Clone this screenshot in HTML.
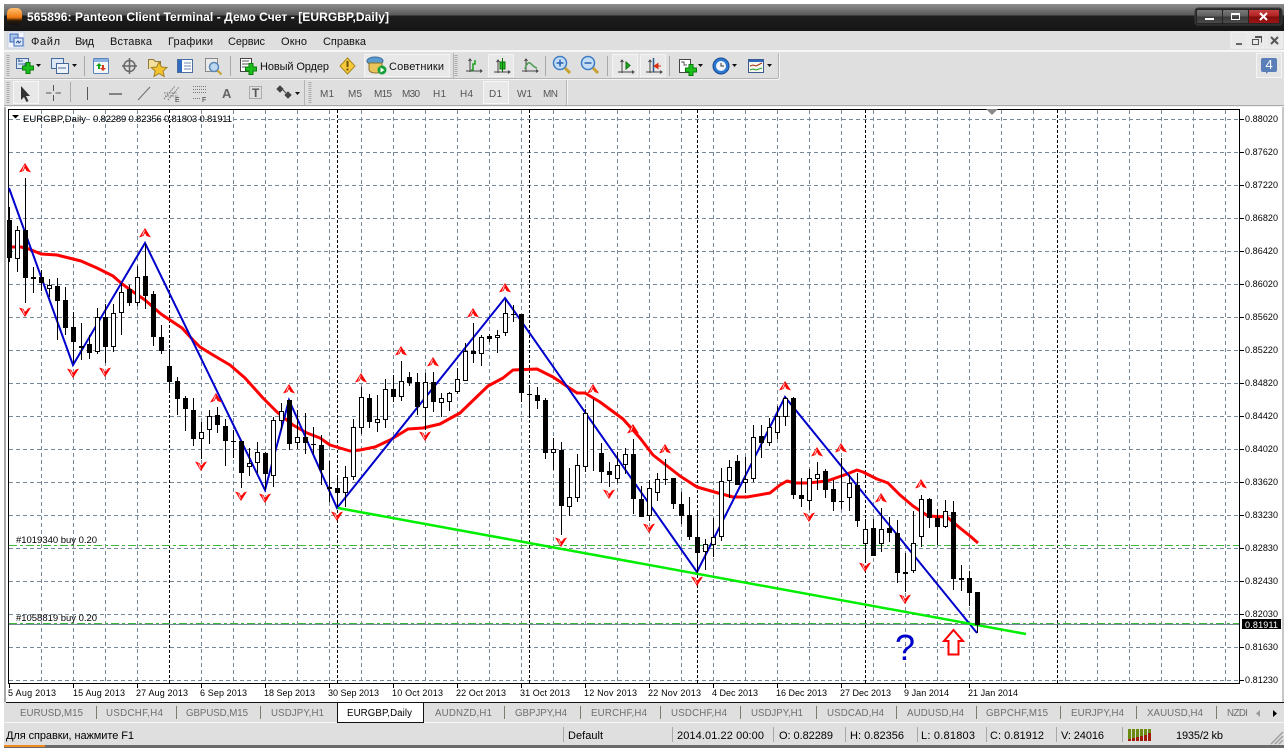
<!DOCTYPE html>
<html><head><meta charset="utf-8"><title>Panteon Client Terminal</title>
<style>
html,body{margin:0;padding:0;background:#fff}
svg{display:block;position:absolute;left:0;top:0;font-size:9.5px}
text{font-family:"Liberation Sans","Noto Sans CJK SC",sans-serif;fill:#000}
.m{font-size:11px;fill:#111}
.tf{font-size:10px;fill:#555}
.tab{font-size:9.7px;fill:#6e6e6e}
.s{font-size:11px;fill:#000}
</style></head><body>
<svg width="1288" height="748" viewBox="0 0 1288 748" xmlns="http://www.w3.org/2000/svg">
<defs>
<linearGradient id="tb" x1="0" y1="0" x2="0" y2="1"><stop offset="0" stop-color="#8e8e8e"/><stop offset=".42" stop-color="#585858"/><stop offset=".43" stop-color="#1e1e1e"/><stop offset="1" stop-color="#151515"/></linearGradient>
<linearGradient id="org" x1="0" y1="0" x2="0" y2="1"><stop offset="0" stop-color="#ffc070"/><stop offset=".55" stop-color="#f07a10"/><stop offset=".75" stop-color="#2a1a08"/><stop offset="1" stop-color="#111"/></linearGradient>
<linearGradient id="cbtn" x1="0" y1="0" x2="0" y2="1"><stop offset="0" stop-color="#7a7a7a"/><stop offset=".5" stop-color="#5c5c5c"/><stop offset=".51" stop-color="#3a3a3a"/><stop offset="1" stop-color="#4a4a4a"/></linearGradient>
<linearGradient id="rbtn" x1="0" y1="0" x2="0" y2="1"><stop offset="0" stop-color="#c84040"/><stop offset=".5" stop-color="#b02020"/><stop offset=".51" stop-color="#800c0c"/><stop offset="1" stop-color="#a01414"/></linearGradient>
<g id="ua"><path d="M0-5L6 4.500 1.500 3 0 0-1.500 3-6 4.500Z" fill="#f00"/><path d="M-.5-2.500L-2.500 2.500" stroke="#fff" stroke-width=".8"/></g>
<g id="da"><path d="M0 5L6-4.500 1.500-3 0 0-1.500-3-6-4.500Z" fill="#f00"/><path d="M.5-1L2.500-3.500" stroke="#fff" stroke-width=".8"/><path d="M-.5 2.500L-2.500-2.500" stroke="#fff" stroke-width=".8"/></g>
<path id="plus" d="M4 .5h4V4h3.500v4H8v3.500H4V8H.5V4H4z" fill="#1cc01c" stroke="#0a7a0a"/>
<g id="ax"><path d="M4 0v13M0 12h16" stroke="#444" fill="none"/><path d="M2.500 2L4 0 5.500 2M14 10.500l2 1.500-2 1.500" stroke="#444" fill="none"/></g>
</defs>

<!-- window chrome -->
<rect x="4" y="4" width="1280" height="27" fill="url(#tb)"/>
<rect x="4" y="31" width="1280" height="714" fill="#dfdfdf"/>
<rect x="4" y="745" width="1280" height="3" fill="#6a6a6a"/>
<rect x="4" y="745" width="41" height="2" fill="#f08a20"/>
<rect x="7" y="8" width="15" height="17" rx="5" fill="url(#org)"/>
<text x="27" y="21" style="font-size:12px;font-weight:bold;fill:#fff" textLength="362">565896: Panteon Client Terminal - Демо Счет - [EURGBP,Daily]</text>
<rect x="1195" y="8" width="87" height="17" rx="3" fill="#262626" stroke="#3c3c3c"/>
<rect x="1197" y="10" width="25" height="13" rx="1" fill="url(#cbtn)"/>
<rect x="1223" y="10" width="25" height="13" rx="1" fill="url(#cbtn)"/>
<rect x="1249" y="10" width="30" height="13" rx="1" fill="url(#rbtn)"/>
<rect x="1205" y="18" width="9" height="2" fill="#fff"/>
<rect x="1231.500" y="13.500" width="8" height="6" fill="none" stroke="#fff"/><rect x="1231" y="13" width="9" height="2" fill="#fff"/>
<path d="M1260 13l7 7M1267 13l-7 7" stroke="#fff" stroke-width="2"/>

<!-- menu -->
<rect x="8" y="32" width="16" height="16" fill="#f4f6fb" stroke="#c8d4e8"/>
<rect x="10" y="34" width="8" height="8" fill="#a9c4ec" stroke="#3a68b4"/>
<rect x="14" y="38" width="9" height="8" fill="#dde8f8" stroke="#3a68b4"/>
<path d="M16 43l2-2 1 2 2-2" stroke="#2a4c90" fill="none"/>
<text class="m" x="31" y="45" textLength="29">Файл</text>
<text class="m" x="75" y="45" textLength="19">Вид</text>
<text class="m" x="110" y="45" textLength="42">Вставка</text>
<text class="m" x="168" y="45" textLength="45">Графики</text>
<text class="m" x="228" y="45" textLength="37">Сервис</text>
<text class="m" x="281" y="45" textLength="26">Окно</text>
<text class="m" x="323" y="45" textLength="43">Справка</text>
<rect x="1231" y="32" width="16" height="16" fill="#e8e8e8" stroke="#f4f4f4"/>
<rect x="1249" y="32" width="15" height="16" fill="#e8e8e8" stroke="#f4f4f4"/>
<rect x="1266" y="32" width="16" height="16" fill="#e8e8e8" stroke="#f4f4f4"/>
<rect x="1236" y="43" width="6" height="2" fill="#666"/>
<path d="M1255.500 36.500h6v6M1252.500 39.500h6v5h-6z" fill="none" stroke="#555"/><rect x="1255" y="36" width="7" height="2" fill="#555"/>
<path d="M1271 37l7 7M1278 37l-7 7" stroke="#555" stroke-width="2"/>

<rect x="4" y="50" width="1280" height="2" fill="#f6f6f6"/>
<!-- toolbar separators/frames -->
<path d="M4 78.500H778M778.500 53V78M453.500 53V78" stroke="#b4b4b4"/>
<path d="M4 79.500H779M779.500 53V79" stroke="#f4f4f4"/>
<path d="M304.500 80V105M566.500 80V105" stroke="#b4b4b4"/>
<path d="M567.500 80V105" stroke="#f4f4f4"/>
<rect x="4" y="105" width="1280" height="1" fill="#a8a8a8"/>
<rect x="4" y="106" width="1280" height="1" fill="#f2f2f2"/>
<path d="M8 55V76M456 55V76M8 82V103M310 82V103" stroke="#aaa" stroke-width="3" stroke-dasharray="1 1"/>
<path d="M84.500 56V76M230.500 56V76M545.500 56V76M607.500 56V76M669.500 56V76M70.500 82V102" stroke="#a8a8a8"/>

<!-- row 1 icons -->
<rect x="16.500" y="58.500" width="12" height="10" fill="#dce8f6" stroke="#46699c"/><path d="M18 61h5M18 64h8M19 59v3M25 63v3" stroke="#46699c"/>
<use href="#plus" x="22" y="62"/>
<path d="M36 64h5l-2.500 3z" fill="#111"/>
<rect x="51.500" y="58.500" width="12" height="10" fill="#dce8f6" stroke="#46699c"/><rect x="56.500" y="63.500" width="12" height="10" fill="#eef3fa" stroke="#46699c"/><path d="M58 68h8" stroke="#46699c"/>
<path d="M72 64h5l-2.500 3z" fill="#111"/>
<rect x="93.500" y="58.500" width="15" height="15" rx="1" fill="#f6f6f6" stroke="#5a86c0"/><rect x="94" y="59" width="14" height="3" fill="#8ab0e0"/>
<path d="M99 63l3 3h-2v3h-2v-3h-2z" fill="#18a018"/><path d="M103 71l-3-3h2v-3h2v3h2z" fill="#d83a1c"/>
<circle cx="129.500" cy="66" r="5.500" fill="none" stroke="#666" stroke-width="1.500"/><path d="M129.500 58v16M122 66h15" stroke="#666" stroke-width="1.500"/>
<path d="M148.500 69V59.500h5l2 2h5v3" fill="#f4e09c" stroke="#8a7a40"/><path d="M159 62l2.500 5 5.500.5-4 3.500 1.200 5.500-5.200-3-5 3 1.200-5.500-4-3.500 5.500-.5z" fill="#f4c430" stroke="#a08020"/>
<rect x="177.500" y="59.500" width="15" height="13" fill="#fff" stroke="#4a6ea0"/><rect x="178" y="60" width="4" height="12" fill="#2f6bc0"/><path d="M184 63h7M184 66h7M184 69h7" stroke="#6a8ab0"/>
<rect x="205.500" y="58.500" width="12" height="13" fill="#eaeaea" stroke="#8a8a8a"/><circle cx="214" cy="67" r="4.500" fill="#bcd8f0" stroke="#5a88b8" stroke-width="1.500"/><path d="M217.500 70.500l4 4" stroke="#c8a030" stroke-width="2"/>
<rect x="240.500" y="58.500" width="11" height="13" fill="#fff" stroke="#444"/><path d="M242 61h7M242 64h7M242 67h4" stroke="#555"/>
<use href="#plus" x="245" y="63"/>
<text class="m" x="260" y="70" textLength="69">Новый Ордер</text>
<path d="M347.500 58l7.500 8-7.500 8-7.500-8z" fill="#f6c83a" stroke="#a8881c"/><rect x="346.500" y="61" width="2" height="6" fill="#6a5208"/><rect x="346.500" y="68.500" width="2" height="2" fill="#6a5208"/>
<rect x="364.500" y="54.500" width="85" height="22" fill="#e8e8e8" stroke="#f4f4f4"/>
<ellipse cx="375" cy="61" rx="8" ry="4" fill="#5a9cd0" stroke="#3a6a9a"/>
<path d="M369 63h13v6c0 3-2 4-6 4s-7-1-7-4z" fill="#e8c45a" stroke="#8a7030"/>
<circle cx="382" cy="70" r="4.500" fill="#18a038"/><path d="M380.500 67.500v5l4-2.500z" fill="#fff"/>
<text class="m" x="389" y="70" textLength="55">Советники</text>

<use href="#ax" x="466" y="59"/><path d="M475 60v4h-2v6h-2" stroke="#18a018" fill="none" stroke-width="1.500"/>
<rect x="488.500" y="54.500" width="25" height="22" fill="#e8e8e8" stroke="#f4f4f4"/>
<use href="#ax" x="494" y="60"/><rect x="500" y="62" width="5" height="7" fill="#22c022" stroke="#0a700a"/><path d="M502.500 58v14" stroke="#0a700a"/>
<use href="#ax" x="522" y="59"/><path d="M525 69c1-4 3-7 5-6s3 4 7 5" stroke="#4a9a50" fill="none" stroke-width="1.500"/>
<circle cx="560" cy="63" r="6.500" fill="#c4def6" stroke="#3c7cc4" stroke-width="1.500"/><path d="M556.500 63h7M560 59.500v7" stroke="#2a60b0" stroke-width="1.500"/><path d="M565 68l5 5" stroke="#c8a030" stroke-width="3"/>
<circle cx="588" cy="63" r="6.500" fill="#c4def6" stroke="#3c7cc4" stroke-width="1.500"/><path d="M584.500 63h7" stroke="#2a60b0" stroke-width="1.500"/><path d="M593 68l5 5" stroke="#c8a030" stroke-width="3"/>
<rect x="612.500" y="54.500" width="25" height="22" fill="#e8e8e8" stroke="#f4f4f4"/><use href="#ax" x="618" y="60"/><path d="M626 62v7l4-3.500z" fill="#22b022" stroke="#0a700a"/>
<rect x="640.500" y="54.500" width="25" height="22" fill="#e8e8e8" stroke="#f4f4f4"/><use href="#ax" x="646" y="60"/><path d="M653.500 58v14" stroke="#2a5a8a" stroke-width="1.500"/><path d="M661 66h-3M654 66l4-2.500v5z" fill="#d83010" stroke="#d83010"/>
<rect x="679.500" y="59.500" width="11" height="13" fill="#fff" stroke="#444"/><path d="M681 62h3v3h3" stroke="#555" fill="none"/>
<use href="#plus" x="685" y="64"/><path d="M698 64h5l-2.500 3z" fill="#111"/>
<circle cx="721" cy="66" r="8" fill="#2a78d0" stroke="#1a4a90"/><circle cx="721" cy="66" r="5" fill="#f2f6fb"/><path d="M721 63v3h3" stroke="#333" fill="none"/>
<path d="M732 64h5l-2.500 3z" fill="#111"/>
<rect x="748.500" y="59.500" width="15" height="13" fill="#f6f8f0" stroke="#3a5a90"/><rect x="749" y="60" width="14" height="2" fill="#2a68c0"/><path d="M750 66l3-1 3 1 6-3" stroke="#a03010" fill="none"/><path d="M750 70l3-1 3 1 6-2" stroke="#20a020" fill="none"/>
<path d="M767 64h5l-2.500 3z" fill="#111"/>
<rect x="1256.500" y="53.500" width="25" height="24" fill="#e4e4e4" stroke="#f4f4f4"/>
<path d="M1263 58h12a2 2 0 0 1 2 2v10a2 2 0 0 1-2 2h-7l-2 2v-2h-3a2 2 0 0 1-2-2V60a2 2 0 0 1 2-2z" fill="#5a7fb8"/>
<text x="1265.500" y="69" style="font-size:13px;fill:#fff">4</text>

<!-- row 2 icons -->
<rect x="13.500" y="81.500" width="25" height="22" fill="#e8e8e8" stroke="#f6f6f6"/>
<path d="M21 86v14l3-3 2.500 5 2-1-2.500-5h4z" fill="#333"/>
<path d="M53.500 85v6M53.500 95v6M46 93h5.500M55.500 93H61" stroke="#555"/>
<path d="M87.500 87v13" stroke="#555"/>
<path d="M109 94h13" stroke="#444" stroke-width="1.200"/>
<path d="M138 100l12-13" stroke="#777" stroke-width="1.200"/>
<path d="M164 99l11-13M168 100l11-13M164 93h13M165 96h13" stroke="#777" stroke-dasharray="1.500 1"/>
<text x="175" y="102" style="font-size:7px;fill:#333">E</text>
<path d="M193 86.500h14M193 89.500h14M193 92.500h14M193 98.500h7" stroke="#777" stroke-dasharray="1 1"/>
<text x="202" y="102" style="font-size:7px;fill:#333">F</text>
<text x="222" y="98" style="font-size:13px;font-weight:bold;fill:#666">A</text>
<rect x="249.500" y="86.500" width="12" height="12" fill="none" stroke="#777" stroke-dasharray="1 1"/><text x="252" y="97" style="font-size:12px;font-weight:bold;fill:#555">T</text>
<path d="M280 86l3 3-3 3-3-3zM288 92l3 3-3 3-3-3zM283 90l3 3" fill="#444" stroke="#444"/><path d="M295 92h5l-2.500 3z" fill="#111"/>
<text class="tf" x="320" y="97" textLength="14">M1</text>
<text class="tf" x="348" y="97" textLength="14">M5</text>
<text class="tf" x="374" y="97" textLength="18">M15</text>
<text class="tf" x="402" y="97" textLength="18">M30</text>
<text class="tf" x="433" y="97" textLength="13">H1</text>
<text class="tf" x="460" y="97" textLength="13">H4</text>
<rect x="483.500" y="81.500" width="25" height="22" fill="#e8e8e8" stroke="#f6f6f6"/>
<text class="tf" x="489" y="97" textLength="13">D1</text>
<text class="tf" x="517" y="97" textLength="15">W1</text>
<text class="tf" x="543" y="97" textLength="15">MN</text>

<!-- chart frame -->
<rect x="4" y="107" width="2" height="595" fill="#a8a8a8"/>
<rect x="6" y="107" width="1278" height="595" fill="#fff"/>
<rect x="1282" y="107" width="2" height="595" fill="#c8c8c8"/>
<g shape-rendering="crispEdges">
<path stroke="#778899" fill="none" stroke-dasharray="4 3" d="M9 119.500H1239M9 152.500H1239M9 185.500H1239M9 218.500H1239M9 251.500H1239M9 284.500H1239M9 317.500H1239M9 350.500H1239M9 383.500H1239M9 416.500H1239M9 449.500H1239M9 482.500H1239M9 515.500H1239M9 548.500H1239M9 581.500H1239M9 614.500H1239M9 647.500H1239M9 680.500H1239"/>
<path stroke="#778899" fill="none" stroke-dasharray="4 3" d="M41.500 110V683M73.500 110V683M105.500 110V683M137.500 110V683M201.500 110V683M233.500 110V683M265.500 110V683M297.500 110V683M329.500 110V683M361.500 110V683M393.500 110V683M425.500 110V683M457.500 110V683M489.500 110V683M521.500 110V683M553.500 110V683M585.500 110V683M617.500 110V683M649.500 110V683M681.500 110V683M713.500 110V683M745.500 110V683M777.500 110V683M809.500 110V683M841.500 110V683M873.500 110V683M905.500 110V683M937.500 110V683M969.500 110V683M1001.500 110V683M1033.500 110V683M1065.500 110V683M1097.500 110V683M1129.500 110V683M1161.500 110V683M1193.500 110V683M1225.500 110V683"/>
<path stroke="#000" fill="none" stroke-dasharray="3 2" d="M169.500 110V683M337.500 110V683M529.500 110V683M697.500 110V683M865.500 110V683M1057.500 110V683"/>
<path stroke="#778899" d="M9 624.500H1239"/>
<path stroke="#3cb83c" fill="none" stroke-dasharray="8 3 3 3" d="M9 545.500H1239"/>
<path stroke="#3cb83c" fill="none" stroke-width="1" stroke-dasharray="8 3 3 3" d="M9 623.500H1239"/>
</g>
<path d="M8.500 109.500H1239.500V683.500H8.500Z" fill="none" stroke="#000"/>
<path d="M986 109h12l-6 6z" fill="#8a8a8a"/>
<path d="M9.500 684V688M73.500 684V688M137.500 684V688M201.500 684V688M265.500 684V688M329.500 684V688M393.500 684V688M457.500 684V688M521.500 684V688M585.500 684V688M649.500 684V688M713.500 684V688M777.500 684V688M841.500 684V688M905.500 684V688M969.500 684V688M1240 119.500H1244M1240 152.500H1244M1240 185.500H1244M1240 218.500H1244M1240 251.500H1244M1240 284.500H1244M1240 317.500H1244M1240 350.500H1244M1240 383.500H1244M1240 416.500H1244M1240 449.500H1244M1240 482.500H1244M1240 515.500H1244M1240 548.500H1244M1240 581.500H1244M1240 614.500H1244M1240 647.500H1244M1240 680.500H1244" stroke="#000"/>

<!-- MA / zigzag / trend -->
<path fill="none" stroke="#f00" stroke-width="3" stroke-linejoin="round" d="M9 247L21 247 29 249 41 254 57 255 65 257 81 261 97 268 113 276 121 283 129 289 145 300 153 307 161 314 170 320 182 328 193 340 200 347 213 355 230 365 245 378 263 398 278 413 293 425 307 433 320 438 330 445 340 448 350 451 360 450 375 447 390 440 408 429 423 428 440 424 460 413 488 386 503 378 513 370 537 369 553 377 577 393 585 393 600 402 623 419 640 438 653 455 662 462 680 476 697 487 718 493 733 497 747 497 770 493 780 485 787 481 795 483 808 483 827 481 847 474 857 470 863 472 877 479 888 483 900 495 913 506 928 516 947 517 960 528 970 536 978 543"/>
<path fill="none" stroke="#0000cc" stroke-width="2" d="M9 188L73 365 145 243 265 490 289 400 337 508 505 298 697 572 785 397 977 633"/>
<path fill="none" stroke="#00ee00" stroke-width="2.500" d="M338 508L1026 634"/>

<!-- candles -->
<g shape-rendering="crispEdges">
<path stroke="#000" fill="none" d="M9.500 207V262M17.500 226V272M25.500 178V303M33.500 267V293M41.500 270V291M49.500 279V297M57.500 278V340M65.500 287V335M73.500 312V363M81.500 323V360M89.500 335V359M97.500 308V354M105.500 304V363M113.500 304V352M121.500 283V335M129.500 285V306M137.500 266V306M145.500 244V309M153.500 291V346M161.500 325V354M169.500 349V393M177.500 377V415M185.500 396V431M193.500 398V446M201.500 422V459M209.500 410V444M217.500 407V433M225.500 419V466M233.500 430V458M241.500 441V488M249.500 448V476M257.500 442V473M265.500 452V490M273.500 417V487M281.500 403V430M289.500 400V450M297.500 410V449M305.500 413V454M313.500 427V454M321.500 435V485M329.500 461V502M337.500 475V507M345.500 466V507M353.500 419V480M361.500 387V434M369.500 394V428M377.500 395V432M385.500 379V428M393.500 375V402M401.500 361V401M409.500 372V386M417.500 373V415M425.500 373V430M433.500 372V412M441.500 393V417M449.500 392V411M457.500 368V394M465.500 343V381M473.500 323V363M481.500 335V366M489.500 334V342M497.500 330V353M505.500 300V336M513.500 305V322M521.500 314V402M529.500 385V417M537.500 387V409M545.500 398V459M553.500 438V470M561.500 442V535M569.500 468V516M577.500 454V502M585.500 409V472M593.500 399V471M601.500 443V483M609.500 462V487M617.500 452V483M625.500 448V474M633.500 439V514M641.500 486V517M649.500 480V521M657.500 473V501M665.500 459V485M673.500 478V509M681.500 492V524M689.500 497V540M697.500 512V573M705.500 539V570M713.500 518V557M721.500 468V541M729.500 460V498M737.500 455V485M745.500 457V493M753.500 425V482M761.500 425V458M769.500 418V446M777.500 406V439M785.500 397V426M793.500 397V499M801.500 478V507M809.500 469V510M817.500 462V490M825.500 469V498M833.500 480V511M841.500 458V509M849.500 475V511M857.500 473V527M865.500 519V562M873.500 519V556M881.500 508V552M889.500 517V542M897.500 520V583M905.500 553V592M913.500 511V573M921.500 495V547M929.500 498V528M937.500 509V545M945.500 500V528M953.500 501V590M961.500 565V591M969.500 571V606M977.500 592V633"/>
<path fill="#000" d="M7 220h5v38h-5zM23 230h5v48h-5zM31 277h5v2h-5zM39 277h5v6h-5zM55 286h5v15h-5zM63 300h5v28h-5zM71 327h5v15h-5zM79 346h5v2h-5zM87 344h5v9h-5zM103 317h5v30h-5zM127 289h5v14h-5zM143 276h5v20h-5zM151 294h5v43h-5zM159 337h5v14h-5zM167 366h5v16h-5zM175 381h5v18h-5zM183 398h5v11h-5zM191 410h5v29h-5zM215 415h5v10h-5zM223 426h5v15h-5zM231 441h5v1h-5zM239 441h5v32h-5zM263 453h5v21h-5zM287 400h5v44h-5zM303 437h5v6h-5zM311 444h5v1h-5zM319 445h5v25h-5zM327 487h5v2h-5zM335 488h5v5h-5zM367 398h5v24h-5zM391 389h5v8h-5zM407 377h5v6h-5zM415 382h5v25h-5zM431 382h5v20h-5zM471 351h5v3h-5zM487 336h5v3h-5zM511 314h5v1h-5zM519 314h5v79h-5zM527 394h5v1h-5zM535 395h5v6h-5zM543 400h5v53h-5zM559 450h5v56h-5zM599 453h5v19h-5zM607 471h5v4h-5zM631 454h5v45h-5zM639 499h5v18h-5zM663 479h5v1h-5zM671 478h5v26h-5zM679 504h5v12h-5zM687 515h5v22h-5zM695 537h5v16h-5zM735 461h5v24h-5zM759 436h5v7h-5zM791 398h5v97h-5zM799 495h5v4h-5zM823 471h5v19h-5zM831 489h5v13h-5zM839 501h5v1h-5zM855 485h5v36h-5zM871 528h5v28h-5zM887 528h5v5h-5zM895 533h5v40h-5zM927 499h5v19h-5zM935 518h5v9h-5zM951 512h5v67h-5zM967 578h5v15h-5zM975 592h5v33h-5z"/>
<path fill="#fff" stroke="#000" d="M15.500 230.500h4v28h-4zM47.500 285.500h4v3h-4zM95.500 317.500h4v34h-4zM111.500 313.500h4v33h-4zM119.500 292.500h4v20h-4zM135.500 277.500h4v25h-4zM199.500 432.500h4v6h-4zM207.500 416.500h4v13h-4zM247.500 463.500h4v3h-4zM255.500 452.500h4v10h-4zM271.500 420.500h4v55h-4zM279.500 411.500h4v9h-4zM295.500 437.500h4v5h-4zM343.500 477.500h4v15h-4zM351.500 427.500h4v49h-4zM359.500 397.500h4v30h-4zM375.500 419.500h4v3h-4zM383.500 389.500h4v30h-4zM399.500 381.500h4v15h-4zM423.500 382.500h4v25h-4zM439.500 398.500h4v4h-4zM447.500 393.500h4v8h-4zM455.500 379.500h4v12h-4zM463.500 351.500h4v29h-4zM479.500 337.500h4v16h-4zM495.500 335.500h4v2h-4zM503.500 313.500h4v19h-4zM551.500 449.500h4v3h-4zM567.500 497.500h4v9h-4zM575.500 465.500h4v32h-4zM583.500 413.500h4v53h-4zM615.500 465.500h4v13h-4zM623.500 454.500h4v10h-4zM647.500 488.500h4v27h-4zM655.500 479.500h4v13h-4zM703.500 544.500h4v7h-4zM711.500 537.500h4v7h-4zM719.500 481.500h4v55h-4zM727.500 467.500h4v13h-4zM743.500 479.500h4v3h-4zM751.500 437.500h4v41h-4zM767.500 427.500h4v15h-4zM775.500 416.500h4v16h-4zM783.500 398.500h4v18h-4zM807.500 478.500h4v22h-4zM815.500 474.500h4v4h-4zM847.500 483.500h4v14h-4zM863.500 529.500h4v14h-4zM879.500 529.500h4v14h-4zM903.500 572.500h4v1h-4zM911.500 543.500h4v27h-4zM919.500 499.500h4v37h-4zM943.500 511.500h4v15h-4zM959.500 578.500h4v1h-4z"/>
</g>

<!-- fractal arrows -->
<use href="#ua" x="25" y="168"/><use href="#ua" x="145" y="233"/><use href="#ua" x="216" y="398"/><use href="#ua" x="289" y="389"/><use href="#ua" x="361" y="378"/><use href="#ua" x="401" y="351"/><use href="#ua" x="433" y="362"/><use href="#ua" x="473" y="313"/><use href="#ua" x="505" y="288"/><use href="#ua" x="593" y="389"/><use href="#ua" x="633" y="429"/><use href="#ua" x="665" y="449"/><use href="#ua" x="785" y="386"/><use href="#ua" x="817" y="452"/><use href="#ua" x="841" y="448"/><use href="#ua" x="881" y="498"/><use href="#ua" x="921" y="484"/>
<use href="#da" x="25" y="312"/><use href="#da" x="73" y="373"/><use href="#da" x="105" y="372"/><use href="#da" x="201" y="466"/><use href="#da" x="241" y="496"/><use href="#da" x="265" y="498"/><use href="#da" x="337" y="516"/><use href="#da" x="425" y="436"/><use href="#da" x="561" y="542"/><use href="#da" x="609" y="494"/><use href="#da" x="649" y="528"/><use href="#da" x="697" y="581"/><use href="#da" x="809" y="517"/><use href="#da" x="865" y="567"/><use href="#da" x="905" y="599"/>

<text x="895" y="660" style="font-size:36px;fill:#0000cc">?</text>
<path d="M953.500 630L963 641H958.500V654.500H948.500V641H944Z" fill="#fff" stroke="#f00" stroke-width="2"/>

<!-- chart text -->
<path d="M12 115h7l-3.500 3.500z" fill="#000"/>
<text x="23" y="122" textLength="63">EURGBP,Daily</text>
<text x="93" y="122" textLength="139">0.82289 0.82356 0.81803 0.81911</text>
<text x="16" y="543" textLength="81">#1019340 buy 0.20</text>
<text x="16" y="621" textLength="81">#1058819 buy 0.20</text>

<g style="font-size:9px">
<text x="1245" y="122" textLength="33">0.88020</text><text x="1245" y="155" textLength="33">0.87620</text><text x="1245" y="188" textLength="33">0.87220</text><text x="1245" y="221" textLength="33">0.86820</text><text x="1245" y="254" textLength="33">0.86420</text><text x="1245" y="287" textLength="33">0.86020</text><text x="1245" y="320" textLength="33">0.85620</text><text x="1245" y="353" textLength="33">0.85220</text><text x="1245" y="386" textLength="33">0.84820</text><text x="1245" y="419" textLength="33">0.84420</text><text x="1245" y="452" textLength="33">0.84020</text><text x="1245" y="485" textLength="33">0.83620</text><text x="1245" y="518" textLength="33">0.83230</text><text x="1245" y="551" textLength="33">0.82830</text><text x="1245" y="584" textLength="33">0.82430</text><text x="1245" y="617" textLength="33">0.82030</text><text x="1245" y="650" textLength="33">0.81630</text><text x="1245" y="683" textLength="33">0.81230</text>
<rect x="1242" y="619" width="39" height="10" fill="#000"/>
<text x="1245" y="628" textLength="33" style="fill:#fff">0.81911</text>

<text x="8" y="696" textLength="48">5 Aug 2013</text><text x="73" y="696" textLength="52">15 Aug 2013</text><text x="136" y="696" textLength="52">27 Aug 2013</text><text x="200" y="696" textLength="47">6 Sep 2013</text><text x="264" y="696" textLength="51">18 Sep 2013</text><text x="328" y="696" textLength="51">30 Sep 2013</text><text x="392" y="696" textLength="51">10 Oct 2013</text><text x="456" y="696" textLength="50">22 Oct 2013</text><text x="520" y="696" textLength="50">31 Oct 2013</text><text x="584" y="696" textLength="53">12 Nov 2013</text><text x="648" y="696" textLength="53">22 Nov 2013</text><text x="712" y="696" textLength="46">4 Dec 2013</text><text x="776" y="696" textLength="51">16 Dec 2013</text><text x="840" y="696" textLength="51">27 Dec 2013</text><text x="904" y="696" textLength="45">9 Jan 2014</text><text x="968" y="696" textLength="50">21 Jan 2014</text>
</g>

<!-- tabs -->
<rect x="4" y="703" width="1280" height="19" fill="#dfdfdf"/>
<rect x="6" y="702" width="1278" height="1" fill="#111"/>
<rect x="4" y="722" width="1280" height="1" fill="#f6f6f6"/>
<path d="M337.500 703V722.500H423.500V703" fill="#fff" stroke="#111"/>
<path d="M96.500 706V719M176.500 706V719M260.500 706V719M504.500 706V719M580.500 706V719M660.500 706V719M740.500 706V719M816.500 706V719M896.500 706V719M976.500 706V719M1060.500 706V719M1136.500 706V719M1216.500 706V719" stroke="#7c7c70"/>
<text class="tab" x="20" y="716" textLength="63">EURUSD,M15</text><text class="tab" x="106" y="716" textLength="57">USDCHF,H4</text><text class="tab" x="186" y="716" textLength="62">GBPUSD,M15</text><text class="tab" x="271" y="716" textLength="53">USDJPY,H1</text>
<text class="tab" x="347" y="716" textLength="65" style="fill:#000">EURGBP,Daily</text>
<text class="tab" x="435" y="716" textLength="57">AUDNZD,H1</text><text class="tab" x="515" y="716" textLength="52">GBPJPY,H4</text><text class="tab" x="591" y="716" textLength="56">EURCHF,H4</text><text class="tab" x="671" y="716" textLength="56">USDCHF,H4</text><text class="tab" x="751" y="716" textLength="52">USDJPY,H1</text><text class="tab" x="827" y="716" textLength="57">USDCAD,H4</text><text class="tab" x="907" y="716" textLength="57">AUDUSD,H4</text><text class="tab" x="986" y="716" textLength="62">GBPCHF,M15</text><text class="tab" x="1071" y="716" textLength="53">EURJPY,H4</text><text class="tab" x="1147" y="716" textLength="56">XAUUSD,H4</text><text class="tab" x="1227" y="716" textLength="21">NZDI</text>
<path d="M1260 710v7l-4-3.500z" fill="#999"/><path d="M1273 710v7l4-3.500z" fill="#000"/>

<!-- status -->
<text class="s" x="6" y="739" textLength="128">Для справки, нажмите F1</text>
<path d="M563.500 727V742M672.500 727V742M773.500 727V742M845.500 727V742M917.500 727V742M986.500 727V742M1056.500 727V742M1122.500 727V742" stroke="#a8a8a8"/>
<text class="s" x="568" y="739" textLength="35">Default</text>
<text class="s" x="677" y="739" textLength="87">2014.01.22 00:00</text>
<text class="s" x="779" y="739" textLength="54">O: 0.82289</text>
<text class="s" x="850" y="739" textLength="54">H: 0.82356</text>
<text class="s" x="921" y="739" textLength="54">L: 0.81803</text>
<text class="s" x="990" y="739" textLength="54">C: 0.81912</text>
<text class="s" x="1061" y="739" textLength="43">V: 24016</text>
<path d="M1128 729h3v11h-3zM1132 729h3v10h-3zM1136 729h3v9h-3zM1140 729h3v8h-3zM1144 729h3v7h-3zM1148 729h3v6h-3z" fill="#6a8a10"/>
<path d="M1128 739h3v2h-3zM1132 738h3v3h-3zM1136 737h3v4h-3zM1140 736h3v5h-3zM1144 735h3v6h-3zM1148 733h3v8h-3z" fill="#a01c08"/>
<text class="s" x="1176" y="739" textLength="47">1935/2 kb</text>
<path d="M1271 744l12-12M1275 744l8-8M1279 744l4-4" stroke="#a0a0a0" stroke-width="1.500"/>
</svg>
</body></html>
